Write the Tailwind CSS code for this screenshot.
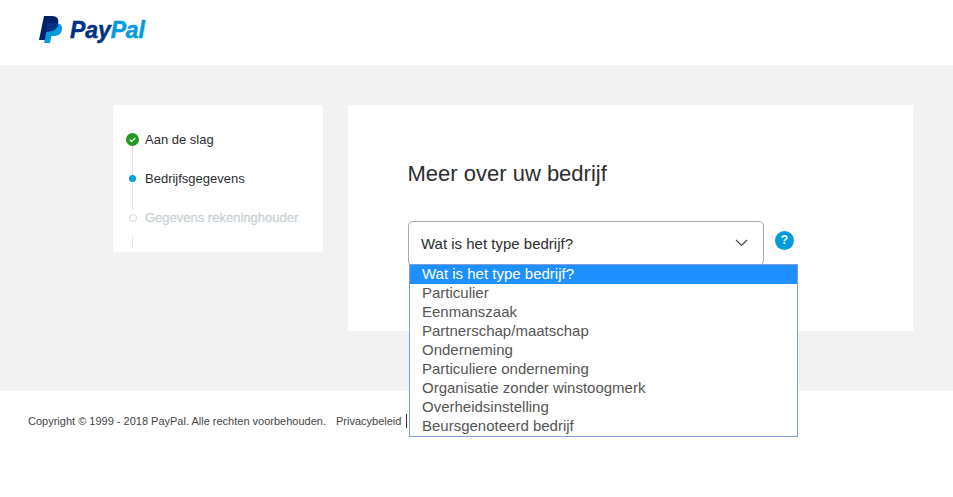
<!DOCTYPE html>
<html lang="nl">
<head>
  <meta charset="UTF-8" />
  <meta name="viewport" content="width=device-width, initial-scale=1.0"/>
  <title>PayPal</title>
  <script src="https://cdn.jsdelivr.net/npm/@tailwindcss/browser@4"></script>
</head>
<body class="bg-white font-['Liberation_Sans',Arial,sans-serif] text-[#2c2e2f] overflow-hidden">
  <div class="w-[953px] h-[497px] flex flex-col">
    <!-- header -->
    <header class="h-[65px] pl-[39px] pt-[16px] flex items-start gap-[7px] bg-white">
      <svg width="24" height="27" viewBox="0 0 24 27">
        <path d="M8 7H15.5C20 7 23.5 8.5 23 13C22.4 18 19 20 15 20H12.4L11 27H5.2Z" fill="#009cde"/>
        <path d="M5 0H13C18 0 20 3 19.2 7C18.2 12.5 14.5 15.5 9.5 15.5H7.4L5.8 24H0Z" fill="#012169"/>
        <path d="M8 7H16.5C18 7.4 19.4 8 19.3 8.8C18.2 13 14.5 15.5 9.5 15.5H7Z" fill="#003087"/>
      </svg>
      <span class="text-[23px] leading-[27px] mt-[1px] font-bold italic tracking-[-0.1px]"><span class="text-[#003087] [-webkit-text-stroke:0.5px_#003087]">Pay</span><span class="text-[#009cde] [-webkit-text-stroke:0.5px_#009cde]">Pal</span></span>
    </header>

    <!-- content -->
    <main class="h-[326px] bg-[#f2f2f2] pt-[40px] pl-[113px] flex items-start gap-[25px]">
      <aside class="relative w-[210px] h-[147px] bg-white">
        <div class="absolute left-[19px] top-[34px] w-px h-[70px] bg-[#e5e5e5]"></div>
        <div class="absolute left-[19px] top-[131px] w-px h-[11px] bg-[#e5e5e5]"></div>
        <ol class="relative pt-[25px] pl-[13px] text-[13px] leading-[19px]">
          <li class="flex items-center h-[19px] gap-[6px]">
            <svg width="13" height="13" viewBox="0 0 13 13">
              <circle cx="6.5" cy="6.5" r="6.5" fill="#1e9b20"/>
              <path d="M3.8 6.8L5.6 8.4L9.3 5" fill="none" stroke="#fff" stroke-width="1.2"/>
            </svg>
            <span>Aan de slag</span>
          </li>
          <li class="flex items-center h-[19px] mt-[20px] gap-[6px]">
            <span class="w-[13px] flex justify-center"><span class="w-[7px] h-[7px] rounded-full bg-[#009cde]"></span></span>
            <span>Bedrijfsgegevens</span>
          </li>
          <li class="flex items-center h-[19px] mt-[20px] gap-[6px] text-[#cbd2d6]">
            <span class="w-[13px] flex justify-center"><span class="w-[8px] h-[8px] rounded-full border border-[#d5d5d5] bg-white"></span></span>
            <span class="[-webkit-text-stroke:0.3px_#cbd2d6]">Gegevens rekeninghouder</span>
          </li>
        </ol>
      </aside>

      <section class="w-[565px] h-[226px] bg-white pl-[60px] pt-[55px]">
        <h1 class="text-[22px] leading-[28px] text-[#2c2e2f] -ml-[0.5px]">Meer over uw bedrijf</h1>
        <div class="flex items-center mt-[33px] gap-[11px]">
          <div class="w-[356px] h-[45px] pl-[12px] pr-[15px] pt-[1px] flex items-center justify-between rounded-[5px] border border-[#a9a9a9] text-[15px]">
            <span>Wat is het type bedrijf?</span>
            <svg width="13" height="8" viewBox="0 0 13 8" class="mb-[3px]"><path d="M1 1L6.5 6.5L12 1" fill="none" stroke="#444" stroke-width="1.1"/></svg>
          </div>
          <span class="w-[19px] h-[19px] mb-[6px] rounded-full bg-[#009cde] text-white text-[12px] leading-[19px] font-bold text-center">?</span>
        </div>
      </section>
    </main>

    <!-- footer -->
    <footer class="pt-[23px] pl-[28px] flex items-center text-[11px] leading-[14px] text-[#444]">
      <span>Copyright © 1999 - 2018 PayPal. Alle rechten voorbehouden.</span>
      <span class="ml-[10px] pr-[5px] border-r border-[#333]">Privacybeleid</span>
    </footer>
  </div>

  <!-- open native select list -->
  <ul class="absolute left-[409px] top-[264px] w-[389px] h-[173px] bg-white border border-[#7f9ddb] text-[15px] leading-[18px] text-[#555]">
    <li class="pl-[12px] h-[19px] bg-[#1e90ff] text-white">Wat is het type bedrijf?</li>
    <li class="pl-[12px] h-[19px]">Particulier</li>
    <li class="pl-[12px] h-[19px]">Eenmanszaak</li>
    <li class="pl-[12px] h-[19px]">Partnerschap/maatschap</li>
    <li class="pl-[12px] h-[19px]">Onderneming</li>
    <li class="pl-[12px] h-[19px]">Particuliere onderneming</li>
    <li class="pl-[12px] h-[19px]">Organisatie zonder winstoogmerk</li>
    <li class="pl-[12px] h-[19px]">Overheidsinstelling</li>
    <li class="pl-[12px] h-[19px]">Beursgenoteerd bedrijf</li>
  </ul>
</body>
</html>
